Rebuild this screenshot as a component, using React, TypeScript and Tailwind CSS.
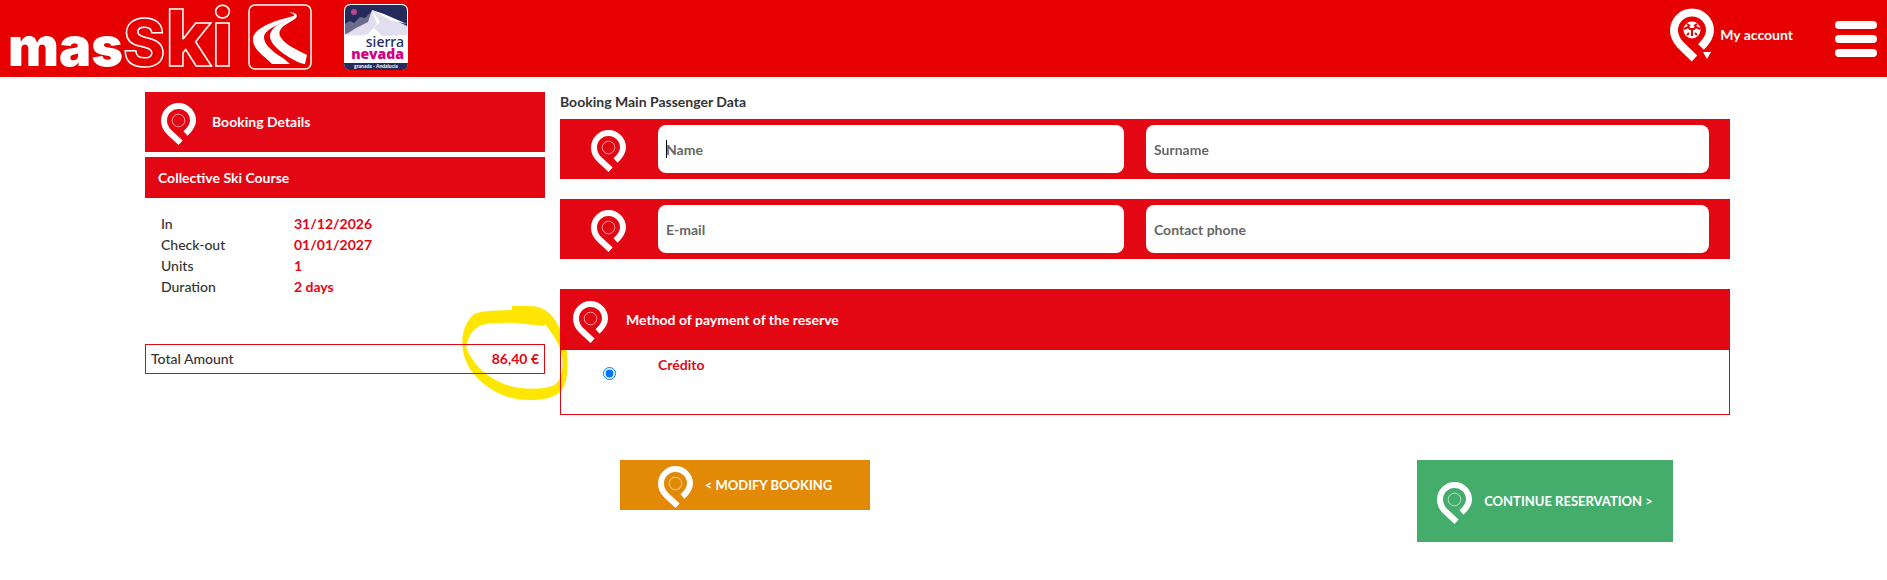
import type { ReactNode } from "react";

type Field = {
  id: string;
  label: string;
  type: string;
  focus?: boolean;
};

const details = [
  { label: "In", value: "31/12/2026" },
  { label: "Check-out", value: "01/01/2027" },
  { label: "Units", value: "1" },
  { label: "Duration", value: "2 days" },
];

const fieldRows: Field[][] = [
  [
    { id: "name", label: "Name", type: "text", focus: true },
    { id: "surname", label: "Surname", type: "text" },
  ],
  [
    { id: "email", label: "E-mail", type: "email" },
    { id: "phone", label: "Contact phone", type: "tel" },
  ],
];

function Pin({ children }: { children?: ReactNode }) {
  return (
    <svg viewBox="0 0 35 42" className="mt-[3px] h-[42px] w-[35px] shrink-0" fill="none" aria-hidden="true">
      <path d="M19.6 39.8 L8 29 C4.500 25.500 3 22 3 17.500 A14.500 14.500 0 1 1 32 17.500 C32 22 30 25.500 24.500 30.500" stroke="white" strokeWidth="6" />
      {children ?? <circle cx="17.5" cy="17.5" r="6.3" stroke="white" strokeWidth="0.6" />}
    </svg>
  );
}

function MasSkiLogo() {
  return (
    <svg viewBox="0 0 240 77" className="h-[77px] w-[240px] overflow-visible" role="img" aria-label="masSki">
      <text x="8" y="67" fill="white" fontFamily="Inter, sans-serif" fontWeight="900" fontSize="54">
        mas
        <tspan fill="none" stroke="white" strokeWidth="1.5" fontWeight="800" fontSize="64">S</tspan>
        <tspan fill="none" stroke="white" strokeWidth="1.5" fontWeight="800" fontSize="78">ki</tspan>
      </text>
    </svg>
  );
}

function SlopeLogo() {
  return (
    <svg viewBox="0 0 64 66" className="h-[66px] w-16" aria-hidden="true">
      <rect x="1" y="1" width="62" height="64" rx="6" fill="none" stroke="white" strokeWidth="1.5" />
      <path
        d="M40 8 C51 9 52 13 42 18 C31 24 29 29 34 35 C39 42 50 46 59 51 L57 60 C48 59 30 47 25 40 C20 33 21 28 28 22 C34 18 47 14 46 11 C45 9 43 9 40 8 Z"
        fill="white"
      />
      <path
        d="M46 12 C33 15 7 22 5 34 C4 46 17 52 24 60 L42 60 C36 54 31 52 26 48 C19 42 16 38 16 33 C17 24 36 19 46 13 Z"
        fill="white"
      />
    </svg>
  );
}

function SierraNevadaLogo() {
  return (
    <svg viewBox="0 0 64 66" className="h-[66px] w-16" role="img" aria-label="Sierra Nevada">
      <rect width="64" height="66" rx="6" fill="white" />
      <path d="M1 22 V7 Q1 1 7 1 H57 Q63 1 63 7 V22 Z" fill="#242b5b" />
      <path d="M1 20 L6 17 L10 19 L16 13 L21 14 L27 8 L34 18 L26 28 L1 30 Z" fill="#6c6b8b" />
      <path d="M1 31 L12 24 L24 18 L28 6 L45 13 L63 22 V31 L40 32 Z" fill="#e1def0" />
      <path d="M28 6 L33 20 L24 30 L10 34 L38 32 L30 24 L36 18 L28 6 L46 16 L63 20 L40 10 Z" fill="white" />
      <circle cx="10" cy="8" r="3" fill="#b5478f" />
      <path d="M0 59 H64 Q64 66 58 66 H6 Q0 66 0 59 Z" fill="#242b5b" />
      <g fontFamily="'Noto Sans', sans-serif" textAnchor="end">
        <text x="60" y="43" fontSize="14" fontWeight="500" fill="#242b5b">sierra</text>
        <text x="60" y="55" fontSize="14" fontWeight="900" fill="#d4007f">nevada</text>
      </g>
      <text x="32" y="64" fontFamily="Lato, sans-serif" fontSize="5" fontWeight="700" fill="white" textAnchor="middle">
        granada - Andalucía
      </text>
    </svg>
  );
}

// marker circle drawn around the total
function Highlight() {
  return (
    <svg
      viewBox="0 0 110 100"
      className="pointer-events-none absolute -right-6 -top-10 z-10 h-[100px] w-[110px] mix-blend-multiply"
      aria-hidden="true"
    >
      <path
        fillRule="evenodd"
        fill="#ffe600"
        d="M54 1 H70 C86 1 94 8 101 22 C108 36 111 52 109 68 C108 86 100 95 72 95 C45 95 25 82 12 64 C1 46 2 24 14 11 C20 5 34 6 54 5 Z M86 21 C70 20 60 17 42 18 C18 17 12 26 8 42 C14 58 28 72 46 79 C62 85 84 85 94 81 C104 77 106 62 104 50 C101 38 94 28 87 19 Z"
      />
    </svg>
  );
}

export default function App() {
  return (
    <div className="min-h-screen bg-white font-['Lato',sans-serif] text-sm text-[#333]">
      <header className="flex h-[77px] items-center justify-between bg-[#e60000] pr-[10px] text-white">
        <div className="flex items-center pb-[3px]">
          <a href="#" className="mr-2"><MasSkiLogo /></a>
          <a href="#" className="mr-8"><SlopeLogo /></a>
          <a href="#"><SierraNevadaLogo /></a>
        </div>
        <div className="flex items-center gap-[42px]">
          <a href="#" className="flex items-center gap-1 pb-2 font-bold">
            <svg viewBox="0 0 46 54" className="h-[54px] w-[46px]" fill="none" aria-hidden="true">
              <path d="M24.500 50.500 L10.500 37 C6 32 4 28 4 22.500 A18 18 0 1 1 40 22.500 C40 28 37 33 31 39" stroke="white" strokeWidth="8" />
              <circle cx="22" cy="22" r="8.5" fill="white" />
              <path d="M14 21 L18 19 L20 21 H24 L26 19 L30 21 M22 21 V28 M17 16 L20 18 M27 16 L24 18 M17 27 L19 25 M27 27 L25 25" stroke="#e60000" strokeWidth="2" />
              <path d="M33 44 H41 L37 51 Z" fill="white" />
            </svg>
            My account
          </a>
          <button type="button" aria-label="Menu" className="flex flex-col gap-[6px]">
            <span className="h-2 w-[42px] rounded-sm bg-white" />
            <span className="h-2 w-[42px] rounded-sm bg-white" />
            <span className="h-2 w-[42px] rounded-sm bg-white" />
          </button>
        </div>
      </header>

      <main className="flex items-start gap-[15px] pl-[145px] pr-[157px] pt-[15px]">
        <aside className="w-[400px] shrink-0">
          <h2 className="flex h-[60px] items-center gap-4 bg-[#e30613] px-4 font-bold text-white">
            <Pin />
            Booking Details
          </h2>
          <h3 className="mt-[5px] flex h-[41px] items-center bg-[#e30613] px-[13px] font-bold text-white">
            Collective Ski Course
          </h3>
          <dl className="mt-[15px] px-4">
            {details.map((item) => (
              <div key={item.label} className="flex leading-[21px]">
                <dt className="w-[133px] font-medium">{item.label}</dt>
                <dd className="font-bold text-[#e30613]">{item.value}</dd>
              </div>
            ))}
          </dl>
          <div className="relative mt-[47px] flex h-[30px] items-center justify-between border border-[#e30613] px-[5px]">
            <span className="font-medium">Total Amount</span>
            <span className="font-bold text-[#e30613]">86,40 €</span>
            <Highlight />
          </div>
        </aside>

        <form className="min-w-0 flex-1">
          <h2 className="mb-[7px] font-bold leading-5">Booking Main Passenger Data</h2>
          <div className="flex flex-col gap-5">
            {fieldRows.map((row) => (
              <div
                key={row[0].id}
                className="grid h-[60px] grid-cols-[76px_466fr_563fr] items-center gap-x-[22px] bg-[#e30613] pr-[21px]"
              >
                <div className="flex justify-end pr-[10px]">
                  <Pin />
                </div>
                {row.map((field) => (
                  <div key={field.id} className="relative flex min-w-0 items-center">
                    <input
                      id={field.id}
                      type={field.type}
                      placeholder={field.label}
                      aria-label={field.label}
                      autoFocus={field.focus}
                      className="h-12 w-full rounded-lg bg-white px-2 font-bold caret-transparent outline-none placeholder:text-[#666]"
                    />
                    {field.focus && <span className="absolute left-2 h-[18px] w-px bg-black" />}
                  </div>
                ))}
              </div>
            ))}
          </div>

          <section className="mt-[30px] h-[126px] border border-[#e30613]">
            <h2 className="flex h-[60px] items-center gap-[18px] bg-[#e30613] px-3 font-bold text-white">
              <Pin />
              Method of payment of the reserve
            </h2>
            <div className="flex pl-[42px] pt-[5px]">
              <input id="credit" type="radio" name="payment" defaultChecked className="mt-3 h-[13px] w-[13px]" />
              <label htmlFor="credit" className="ml-[42px] font-bold text-[#e30613]">Crédito</label>
            </div>
          </section>

          <div className="mt-[45px] flex items-start justify-between pl-[60px] pr-[57px] text-[13px] font-bold text-white">
            <button type="button" className="flex h-[50px] w-[250px] items-center justify-center gap-3 bg-[#e28a05]">
              <Pin />
              &lt; MODIFY BOOKING
            </button>
            <button type="submit" className="flex h-[82px] w-[256px] items-center justify-center gap-3 bg-[#45ad6c]">
              <Pin />
              CONTINUE RESERVATION &gt;
            </button>
          </div>
        </form>
      </main>
    </div>
  );
}
